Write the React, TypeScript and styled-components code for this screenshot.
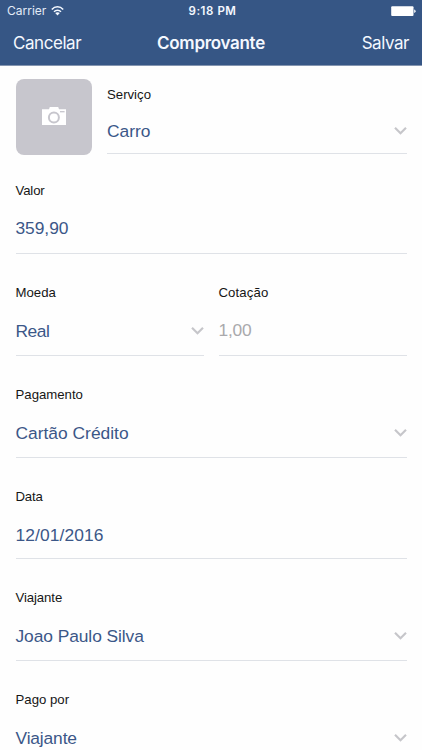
import React from "react";
import styled, { createGlobalStyle } from "styled-components";

const GlobalStyle = createGlobalStyle`
  * { box-sizing: border-box; }
  body {
    margin: 0;
    background: #fefefe;
    overflow: hidden;
    font-family: "Liberation Sans", Arial, sans-serif;
  }
`;

const Screen = styled.div`
  height: 750px;
  overflow: hidden;
  background: #fefefe;
`;

const Header = styled.header`
  height: 66px;
  background: #365685;
  border-bottom: 1px solid #8495b0;
  color: #f4f8ff;
  font-family: Inter, sans-serif;
`;

const StatusBar = styled.div`
  display: grid;
  grid-template-columns: 1fr auto 1fr;
  align-items: center;
  height: 22px;
  padding: 0 6px 0 7px;
  font-size: 12px;
  line-height: 22px;
`;

const Carrier = styled.div`
  display: flex;
  align-items: center;
  gap: 5px;
  letter-spacing: 0px;
  color: #e3ebf7;
`;

const Clock = styled.div`
  padding-left: 2px;
  font-weight: 600;
  font-size: 11.5px;
  letter-spacing: 0.55px;
`;

const BatteryArea = styled.div`
  display: flex;
  justify-content: flex-end;
`;

const NavBar = styled.nav`
  display: grid;
  grid-template-columns: 1fr auto 1fr;
  align-items: center;
  height: 43px;
  padding: 0 13px;
  line-height: 43px;
`;

const NavAction = styled.button<{ $end?: boolean }>`
  padding: 0;
  border: 0;
  background: none;
  color: inherit;
  font: 400 17px/43px Inter, sans-serif;
  letter-spacing: -0.45px;
  text-align: ${(p) => (p.$end ? "right" : "left")};
`;

const Title = styled.h1`
  margin: 0;
  font-size: 17px;
  font-weight: 600;
  letter-spacing: -0.3px;
`;

const Form = styled.main`
  padding: 0 15.5px;
`;

const FirstRow = styled.div`
  display: flex;
  gap: 15px;
  height: 88px;
`;

const PhotoButton = styled.button`
  display: flex;
  align-items: center;
  justify-content: center;
  width: 76.5px;
  height: 76.5px;
  margin-top: 12.5px;
  padding: 0 0 1px;
  border: 0;
  border-radius: 8px;
  background: #c7c6cd;
`;

const SplitRow = styled.div`
  display: grid;
  grid-template-columns: 188px 188px;
  justify-content: space-between;
`;

const FieldBox = styled.div<{ $height: number; $top: number; $gap: number }>`
  flex: 1;
  height: ${(p) => p.$height}px;
  padding-top: ${(p) => p.$top}px;
  border-bottom: 1px solid #dfe2e7;
  display: flex;
  flex-direction: column;
  gap: ${(p) => p.$gap}px;
`;

const Label = styled.label<{ $spacing: number }>`
  font-size: 13.2px;
  line-height: 20px;
  letter-spacing: ${(p) => p.$spacing}px;
  color: #161616;
`;

const ValueRow = styled.div`
  display: flex;
  justify-content: space-between;
  align-items: center;
  height: 24px;
`;

const Value = styled.span<{ $muted?: boolean; $spacing: number }>`
  font-size: 17.4px;
  line-height: 24px;
  letter-spacing: ${(p) => p.$spacing}px;
  color: ${(p) => (p.$muted ? "#a9a9ac" : "#3b5788")};
`;

const Chevron = () => (
  <svg width="13" height="10" viewBox="0 0 13 10" fill="none">
    <path d="M1 1.8 6.5 7.3 12 1.8" stroke="#c6c6ca" strokeWidth="2.2" />
  </svg>
);

const Wifi = () => (
  <svg width="13" height="10" viewBox="0 0 13 10" fill="none" stroke="#f4f8ff">
    <path d="M.8 3.5C4-.1 9-.1 12.2 3.5" strokeWidth="1.6" />
    <path d="M3 5.8c2-2.2 5-2.2 7 0" strokeWidth="1.5" />
    <path d="M6.5 9.4 4.2 7.1c1.3-1.2 3.3-1.2 4.6 0Z" fill="#f4f8ff" stroke="none" />
  </svg>
);

const Battery = () => (
  <svg width="25" height="11" viewBox="0 0 25 11" fill="#fff">
    <rect x="0.2" y="0.2" width="22.3" height="9.8" rx="1" />
    <path d="M23.2 3.5q1.4.3 1.4 1.7t-1.4 1.7Z" />
  </svg>
);

const Camera = () => (
  <svg width="26" height="20" viewBox="0 0 26 20">
    <path d="M1 3.2h7L8.8 1h8.4L18 3.2h7V19H1Z" fill="#fff" />
    <circle cx="12.9" cy="11.5" r="5" fill="#fff" stroke="#c7c6cd" strokeWidth="2" />
    <path d="M19 5.7h4.6" stroke="#c7c6cd" strokeWidth="1.3" />
  </svg>
);

interface FieldProps {
  label: string;
  value: string;
  select?: boolean;
  muted?: boolean;
  height?: number;
  top?: number;
  gap?: number;
  labelSpacing?: number;
  valueSpacing?: number;
}

const Field = ({
  label, value, select, muted, height = 102, top = 29, gap = 16,
  labelSpacing = 0, valueSpacing = 0,
}: FieldProps) => (
  <FieldBox $height={height} $top={top} $gap={gap}>
    <Label $spacing={labelSpacing}>{label}</Label>
    <ValueRow>
      <Value $muted={muted} $spacing={valueSpacing}>{value}</Value>
      {select && <Chevron />}
    </ValueRow>
  </FieldBox>
);

export default function App() {
  return (
    <Screen>
      <GlobalStyle />
      <Header>
        <StatusBar>
          <Carrier>Carrier <Wifi /></Carrier>
          <Clock>9:18 PM</Clock>
          <BatteryArea><Battery /></BatteryArea>
        </StatusBar>
        <NavBar>
          <NavAction>Cancelar</NavAction>
          <Title>Comprovante</Title>
          <NavAction $end>Salvar</NavAction>
        </NavBar>
      </Header>
      <Form>
        <FirstRow>
          <PhotoButton aria-label="Foto"><Camera /></PhotoButton>
          <Field label="Serviço" value="Carro" select height={88} top={19} gap={14} />
        </FirstRow>
        <Field label="Valor" value="359,90" height={100} top={27} gap={15} labelSpacing={-0.15} valueSpacing={-0.05} />
        <SplitRow>
          <Field label="Moeda" value="Real" select valueSpacing={-0.5} />
          <Field label="Cotação" value="1,00" muted gap={15} labelSpacing={0.1} valueSpacing={-0.2} />
        </SplitRow>
        <Field label="Pagamento" value="Cartão Crédito" select />
        <Field label="Data" value="12/01/2016" height={101} labelSpacing={-0.15} valueSpacing={0.1} />
        <Field label="Viajante" value="Joao Paulo Silva" select labelSpacing={-0.1} valueSpacing={-0.08} />
        <Field label="Pago por" value="Viajante" select valueSpacing={-0.15} />
      </Form>
    </Screen>
  );
}
